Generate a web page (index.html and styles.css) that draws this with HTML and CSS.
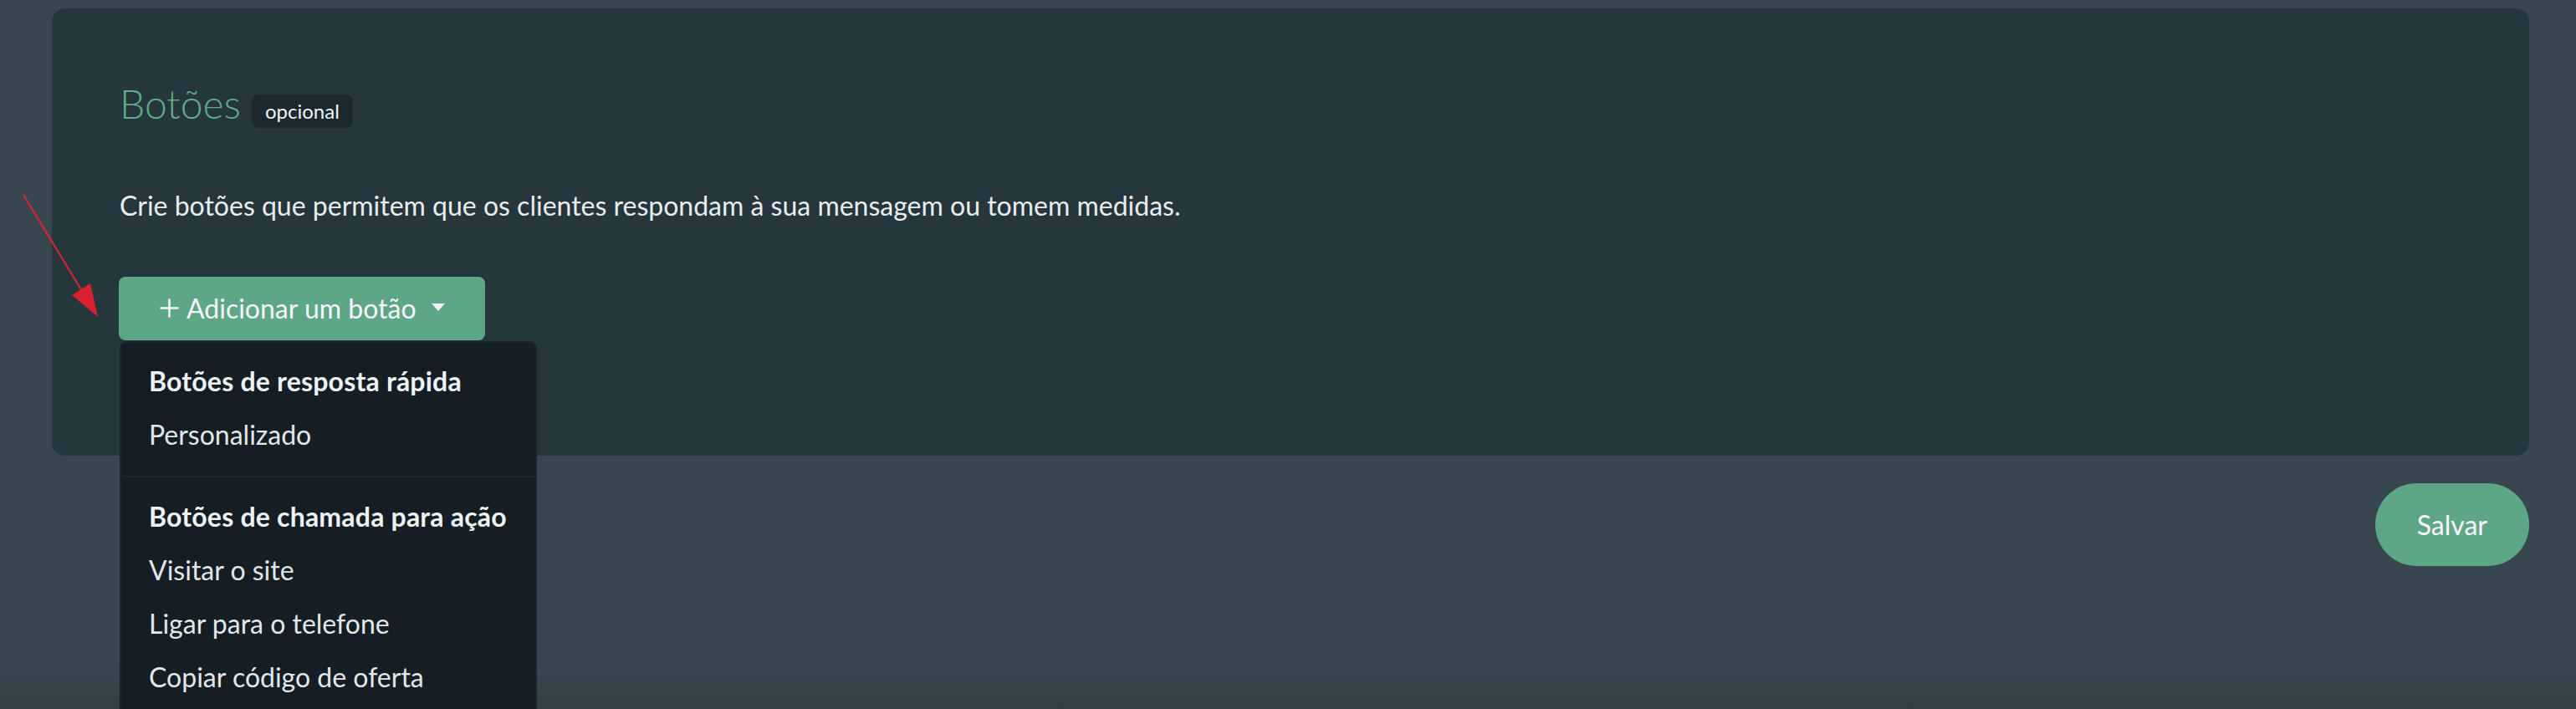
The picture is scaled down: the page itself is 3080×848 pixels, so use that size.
FILE: index.html
```html
<!DOCTYPE html>
<html lang="pt-BR">
<head>
<meta charset="utf-8">
<title>Botões</title>
<link rel="stylesheet" href="styles.css">
</head>
<body>
<main class="page">
  <section class="card">
    <div class="title-row">
      <h2 class="title">Botões</h2>
      <span class="badge">opcional</span>
    </div>
    <p class="desc">Crie botões que permitem que os clientes respondam à sua mensagem ou tomem medidas.</p>
    <div class="dropdown">
      <button class="add-btn" type="button">
        <svg class="plus" width="23" height="23" viewBox="0 0 23 23" aria-hidden="true"><path d="M11.5 0.5V22.5M0.5 11.5H22.5" stroke="#f4f6fb" stroke-width="2.6" fill="none"/></svg>
        <span class="add-label">Adicionar um botão</span>
        <svg class="caret" width="16" height="9" viewBox="0 0 16 9" aria-hidden="true"><path d="M0 0H16L8 9Z" fill="#f1f1fb"/></svg>
      </button>
      <div class="menu">
        <div class="menu-head">Botões de resposta rápida</div>
        <div class="menu-item">Personalizado</div>
        <div class="menu-divider"></div>
        <div class="menu-head">Botões de chamada para ação</div>
        <div class="menu-item">Visitar o site</div>
        <div class="menu-item">Ligar para o telefone</div>
        <div class="menu-item">Copiar código de oferta</div>
      </div>
    </div>
  </section>
  <div class="actions">
    <button class="save" type="button">Salvar</button>
  </div>
</main>
<svg class="annotation" width="140" height="400" viewBox="0 0 140 400" aria-hidden="true">
  <line x1="28" y1="233" x2="98" y2="348" stroke="#d8222f" stroke-width="2.2"/>
  <polygon points="117,379 86,353 108,339" fill="#d8222f"/>
</svg>
</body>
</html>
```
FILE: styles.css
```css
* { box-sizing: border-box; }

html, body {
  margin: 0;
  height: 848px;
  overflow: hidden;
}

body {
  background: linear-gradient(to bottom, #38474f 0, #38474f 790px, #323f46 848px);
  font-family: Lato, "Liberation Sans", sans-serif;
  color: #e9eef1;
  position: relative;
}

.page {
  padding: 10px 56px 0 62px;
}

.card {
  background: #25363d;
  border-radius: 16px;
  height: 535px;
  padding: 86px 80px 0 81px;
}

.title-row {
  display: flex;
  align-items: baseline;
  gap: 13px;
}

.title {
  margin: 0;
  font-size: 48px;
  line-height: 56px;
  font-weight: 300;
  color: #62ab89;
}

.badge {
  background: #1b292f;
  color: #f1f4f6;
  font-size: 24px;
  line-height: 40px;
  height: 40px;
  padding: 0 16px;
  border-radius: 8px;
}

.desc {
  margin: 69px 0 0;
  font-size: 32px;
  line-height: 48px;
  color: #e8edf0;
}

.dropdown {
  position: relative;
  margin-top: 61px;
  margin-left: -1px;
  width: max-content;
}

.add-btn {
  display: flex;
  align-items: center;
  height: 76px;
  padding: 0 48px 0 49px;
  border: 0;
  border-radius: 8px;
  background: #5ea786;
  color: #f4f6fb;
  font-family: Lato, "Liberation Sans", sans-serif;
  font-size: 32px;
  cursor: pointer;
}

.plus { display: block; margin-top: -2px; }
.add-label { margin-left: 9px; line-height: 72px; }
.caret { display: block; margin-left: 18px; margin-top: -4px; }

.menu {
  position: absolute;
  top: calc(100% + 1px);
  left: 1px;
  width: 499px;
  height: 460px;
  background: #141e24;
  border: 2px solid #1a262c;
  border-radius: 8px;
  padding-top: 14px;
}

.menu-head,
.menu-item {
  height: 64px;
  line-height: 64px;
  padding-left: 33px;
  font-size: 32px;
  white-space: nowrap;
}

.menu-head {
  font-weight: 700;
  color: #eef2f4;
  letter-spacing: 0.2px;
}

.menu-item {
  font-weight: 400;
  color: #e2e7ea;
}

.menu-divider {
  height: 2px;
  background: #1b262c;
  margin: 17px 0 15px;
}

.actions {
  display: flex;
  justify-content: flex-end;
  margin-top: 33px;
}

.save {
  height: 99px;
  padding: 0 50px;
  border: 0;
  border-radius: 50px;
  background: #5ea786;
  color: #f4f6fb;
  font-family: Lato, "Liberation Sans", sans-serif;
  font-size: 32px;
  cursor: pointer;
}

.annotation {
  position: absolute;
  left: 0;
  top: 0;
}
```
